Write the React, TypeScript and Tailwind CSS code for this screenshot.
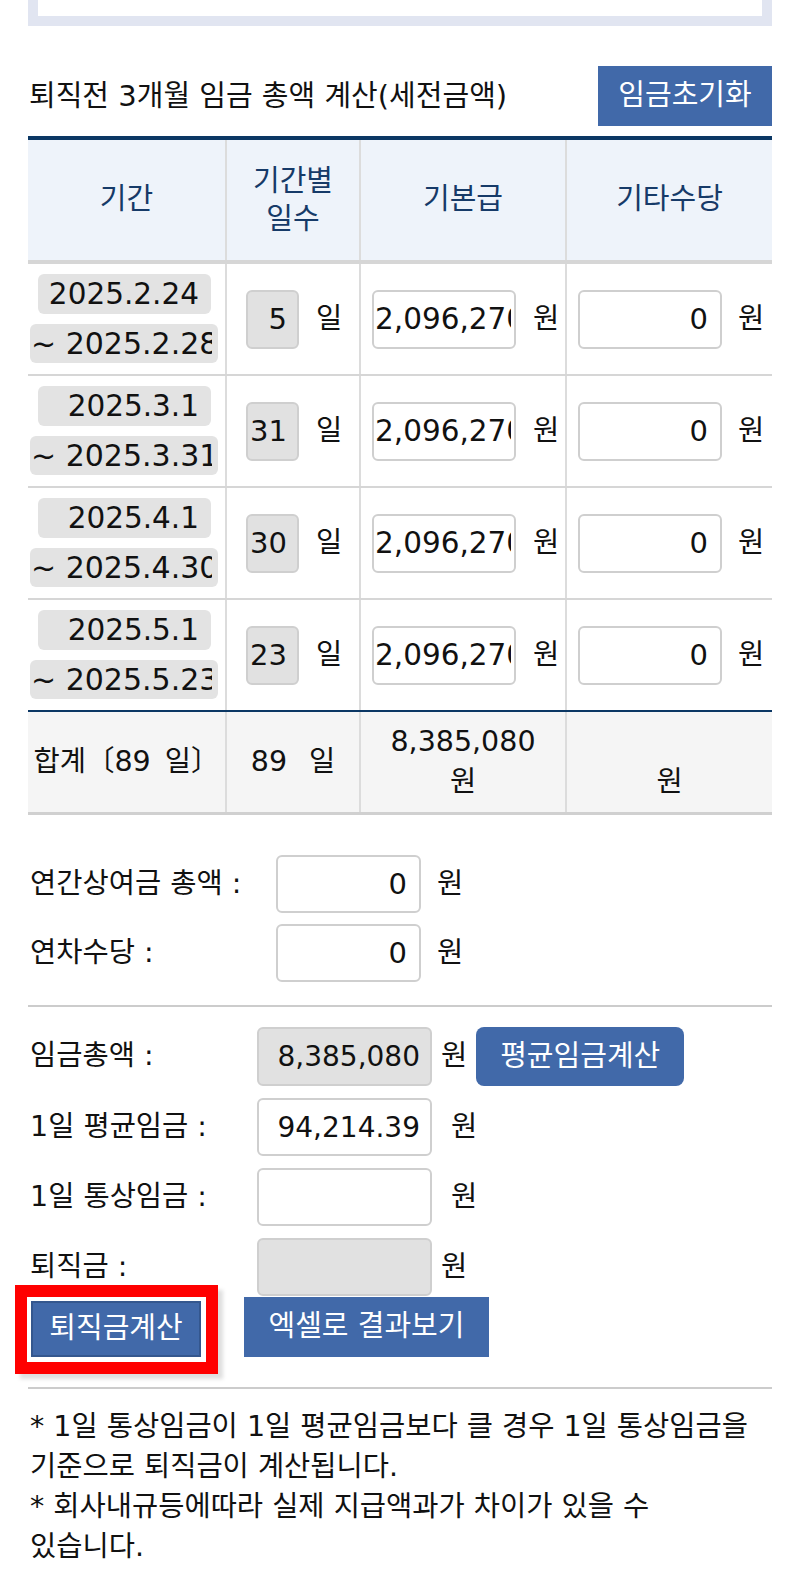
import React from "react";

const rows = [
  { from: "2025.2.24", to: "~ 2025.2.28", days: "5" },
  { from: "2025.3.1", to: "~ 2025.3.31", days: "31" },
  { from: "2025.4.1", to: "~ 2025.4.30", days: "30" },
  { from: "2025.5.1", to: "~ 2025.5.23", days: "23" },
];

const cols = "grid grid-cols-[199px_134px_206px_205px]";

function Field({ value, gray, className }: { value: string; gray?: boolean; className: string }) {
  return (
    <input
      readOnly
      value={value}
      className={`${className} ${gray ? "bg-[#e1e1e1]" : "bg-white"} rounded-[6px] border-2 border-[#cfcfcf] text-[#111] outline-none`}
    />
  );
}

export default function App() {
  return (
    <div className="min-h-[1584px] bg-white px-[28px] text-[28.5px] text-[#111] [font-family:'DejaVu_Sans','Noto_Sans_CJK_KR',sans-serif]">
      <div className="h-[26px] border-x-[10px] border-b-[10px] border-[#e1e5f1] bg-white" />

      <div className="mt-[40px] flex h-[60px] items-center justify-between">
        <h2 className="pl-[1px] text-[29px] font-normal leading-none">퇴직전 3개월 임금 총액 계산(세전금액)</h2>
        <button className="h-[60px] w-[174px] bg-[#4169a9] text-[29px] text-white">임금초기화</button>
      </div>

      <div className="mt-[10px] border-t-4 border-[#0b3764]">
        <div className={`${cols} h-[124px] border-b-4 border-[#d6d6d6] bg-[#eef3fa] text-[29px] text-[#163a68]`}>
          <div className="flex items-center justify-center border-r-2 border-[#dcdcdc]">기간</div>
          <div className="flex items-center justify-center border-r-2 border-[#dcdcdc] text-center leading-[38px]">
            기간별
            <br />
            일수
          </div>
          <div className="flex items-center justify-center border-r-2 border-[#dcdcdc]">기본급</div>
          <div className="flex items-center justify-center">기타수당</div>
        </div>

        {rows.map((r, i) => (
          <div
            key={i}
            className={`${cols} h-[112px] border-b-2 ${i === 3 ? "border-[#0b3764]" : "border-[#d6d6d6]"}`}
          >
            <div className="flex flex-col gap-[10px] border-r-2 border-[#dcdcdc] pt-[10px]">
              <input
                readOnly
                value={r.from}
                className="ml-[10px] h-[40px] w-[173px] rounded-[6px] bg-[#e3e3e3] pr-[12px] text-right text-[29.5px] outline-none"
              />
              <input
                readOnly
                value={r.to}
                className="ml-[2px] h-[39px] w-[188px] rounded-[6px] bg-[#e3e3e3] pl-[1px] pr-[6px] text-[30px] outline-none"
              />
            </div>
            <div className="flex items-center gap-[17px] border-r-2 border-[#dcdcdc] pl-[19px]">
              <Field value={r.days} gray className="h-[59px] w-[53px] rounded-[5px] pr-[10px] text-right text-[29px]" />
              <span>일</span>
            </div>
            <div className="flex items-center gap-[17px] border-r-2 border-[#dcdcdc] pl-[11px]">
              <Field value="2,096,270" className="h-[59px] w-[144px] pl-[1px] pr-[3px] text-[29.5px]" />
              <span>원</span>
            </div>
            <div className="flex items-center gap-[16px] pl-[11px]">
              <Field value="0" className="h-[59px] w-[144px] pr-[12px] text-right text-[29px]" />
              <span>원</span>
            </div>
          </div>
        ))}

        <div className={`${cols} h-[103px] border-b-[3px] border-[#d0d0d0] bg-[#f5f5f5]`}>
          <div className="flex items-center justify-center whitespace-nowrap border-r-2 border-[#dcdcdc]">
            <span>합계〔89</span>
            <span className="ml-[14px]">일〕</span>
          </div>
          <div className="flex items-center justify-center whitespace-nowrap border-r-2 border-[#dcdcdc]">
            <span>89</span>
            <span className="ml-[22px]">일</span>
          </div>
          <div className="flex flex-col items-center justify-center border-r-2 border-[#dcdcdc] leading-[40px]">
            <span>8,385,080</span>
            <span>원</span>
          </div>
          <div className="flex flex-col items-center justify-center leading-[40px]">
            <span className="h-[40px]" />
            <span>원</span>
          </div>
        </div>
      </div>

      <div className="mt-[40px] flex flex-col gap-[11px]">
        <div className="flex h-[58px] items-center">
          <span className="w-[248px] pl-[2px]">연간상여금 총액 :</span>
          <Field value="0" className="h-[58px] w-[145px] pr-[12px] text-right text-[29px]" />
          <span className="ml-[16px]">원</span>
        </div>
        <div className="flex h-[58px] items-center">
          <span className="w-[248px] pl-[2px]">연차수당 :</span>
          <Field value="0" className="h-[58px] w-[145px] pr-[12px] text-right text-[29px]" />
          <span className="ml-[16px]">원</span>
        </div>
      </div>

      <div className="mt-[23px] h-[2px] bg-[#cccccc]" />

      <div className="mt-[20px] flex flex-col gap-[12px]">
        <div className="flex h-[59px] items-center">
          <span className="w-[229px] pl-[2px]">임금총액 :</span>
          <Field value="8,385,080" gray className="h-[59px] w-[175px] pr-[10px] text-right text-[28px]" />
          <span className="ml-[9px]">원</span>
          <button className="ml-[9px] h-[59px] w-[208px] rounded-[8px] bg-[#4169a9] text-[29px] text-white">
            평균임금계산
          </button>
        </div>
        <div className="flex h-[58px] items-center">
          <span className="w-[229px] pl-[2px]">1일 평균임금 :</span>
          <Field value="94,214.39" className="h-[58px] w-[175px] pr-[10px] text-right text-[28px]" />
          <span className="ml-[19px]">원</span>
        </div>
        <div className="flex h-[58px] items-center">
          <span className="w-[229px] pl-[2px]">1일 통상임금 :</span>
          <Field value="" className="h-[58px] w-[175px] pr-[10px] text-right text-[28px]" />
          <span className="ml-[19px]">원</span>
        </div>
        <div className="flex h-[58px] items-center">
          <span className="w-[229px] pl-[2px]">퇴직금 :</span>
          <Field value="" gray className="h-[58px] w-[175px] pr-[10px] text-right text-[28px]" />
          <span className="ml-[9px]">원</span>
        </div>
      </div>

      <div className="mt-[1px] flex items-start">
        <div className="relative ml-[-1px] h-[65px] w-[179px] bg-white p-[4px]">
          <div className="absolute -inset-[12px] border-[12px] border-[#ff0000] shadow-[5px_5px_4px_rgba(0,0,0,0.13)]" />
          <button className="h-[56px] w-[170px] border-2 border-[#34578e] bg-[#4169a9] text-[29px] text-white">
            퇴직금계산
          </button>
        </div>
        <button className="ml-[38px] h-[60px] w-[245px] bg-[#4169a9] text-[29px] text-white">엑셀로 결과보기</button>
      </div>

      <div className="mt-[25px] h-[2px] bg-[#cccccc]" />

      <div className="mt-[18px] whitespace-nowrap pl-[2px] leading-[40px]">
        <p>
          * 1일 통상임금이 1일 평균임금보다 클 경우 1일 통상임금을
          <br />
          기준으로 퇴직금이 계산됩니다.
        </p>
        <p>
          * 회사내규등에따라 실제 지급액과가 차이가 있을 수
          <br />
          있습니다.
        </p>
      </div>
    </div>
  );
}
